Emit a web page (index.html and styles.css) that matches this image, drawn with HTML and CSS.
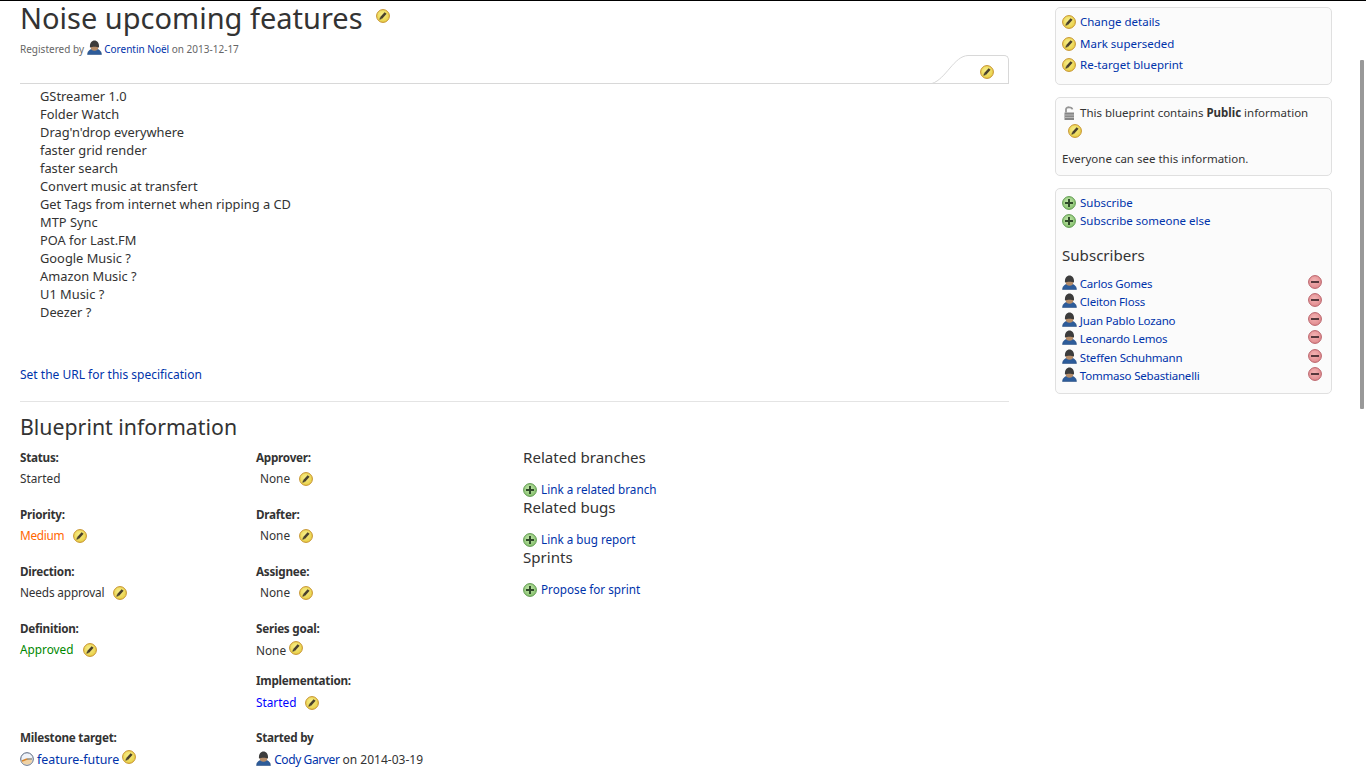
FILE: index.html
```html
<!DOCTYPE html>
<html lang="en">
<head>
    <meta charset="UTF-8">
    <title>Noise upcoming features : Blueprints</title>
    <link rel="stylesheet" href="styles.css">
</head>
<body>
    <svg class="defs" width="0" height="0">
        <defs>
            <radialGradient id="edit-fill" cx="45%" cy="40%" r="60%">
                <stop offset="0" stop-color="#f8ef8c"/>
                <stop offset="1" stop-color="#e8cf45"/>
            </radialGradient>
            <radialGradient id="add-fill" cx="45%" cy="40%" r="60%">
                <stop offset="0" stop-color="#c4e8ae"/>
                <stop offset="1" stop-color="#86c06c"/>
            </radialGradient>
            <radialGradient id="remove-fill" cx="45%" cy="40%" r="60%">
                <stop offset="0" stop-color="#f4b4b4"/>
                <stop offset="1" stop-color="#e08a8e"/>
            </radialGradient>
            <symbol id="edit" viewBox="0 0 14 14">
                <circle cx="7" cy="7" r="6.4" fill="url(#edit-fill)" stroke="#c6922e"/>
                <path d="M5 9.2l4.6-5.2" stroke="#49402c" stroke-width="2.6"/>
                <path d="M3.4 10.8l.6-2.6 1.9 1.7z" fill="#49402c"/>
            </symbol>
            <symbol id="add" viewBox="0 0 14 14">
                <circle cx="7" cy="7" r="6.4" fill="url(#add-fill)" stroke="#5f9a4f"/>
                <path d="M7 3v8M3 7h8" stroke="#2f4a2a" stroke-width="2"/>
            </symbol>
            <symbol id="remove" viewBox="0 0 14 14">
                <circle cx="7" cy="7" r="6.4" fill="url(#remove-fill)" stroke="#b9626a"/>
                <path d="M3 7h8" stroke="#57383c" stroke-width="2"/>
            </symbol>
            <symbol id="person" viewBox="0 0 15 15">
                <path d="M.6 14.6c0-3.6 2.4-5.6 6.9-5.6s6.9 2 6.9 5.6z" fill="#2d5c9a" stroke="#234a80" stroke-width=".6"/>
                <ellipse cx="7.5" cy="7" rx="3.8" ry="3.8" fill="#b58c68"/>
                <path d="M3 7.6C2.4 2.6 5 .4 7.5.4s5.1 2.2 4.5 7.2C10 6.4 5 6.4 3 7.6z" fill="#3c3c3c"/>
            </symbol>
            <symbol id="milestone" viewBox="0 0 14 14">
                <circle cx="7" cy="7" r="6.3" fill="#eef2f8" stroke="#56657d"/>
                <path d="M7 7L1.6 9.2A5.6 5.6 0 0 0 7 12.6a5.6 5.6 0 0 0 5.4-4z" fill="#f0d2a4"/>
                <path d="M7 7L2 9" stroke="#d8842a" stroke-width="1.4"/>
                <path d="M7 7h5" stroke="#6b5a40"/>
            </symbol>
            <symbol id="lock" viewBox="0 0 14 14">
                <rect x="2.5" y="6.5" width="9.5" height="7.5" fill="#858585"/>
                <path d="M4 6.5V3.2C4 .6 10 .6 10.4 3.4" fill="none" stroke="#969696" stroke-width="1.8"/>
                <path d="M2.5 9h9.5M2.5 11.4h9.5" stroke="#bdbdbd"/>
            </symbol>
        </defs>
    </svg>

    <div class="topline"></div>
    <div class="scrollthumb"></div>

    <div class="layout">
        <main class="main">
            <h1>Noise upcoming features <svg class="ico h1-ico"><use href="#edit"/></svg></h1>
            <p class="registered">Registered by <svg class="ico person"><use href="#person"/></svg> <a href="#">Corentin Noël</a> on 2013-12-17</p>

            <div class="tabrow">
                <div class="tab">
                    <svg class="tab-curve" width="46" height="29" viewBox="0 0 46 29"><path d="M0 28.5C14 24 22 1 36 .5H46" fill="#fff" stroke="#d8d8d8"/></svg>
                    <div class="tab-body"><svg class="ico"><use href="#edit"/></svg></div>
                </div>
            </div>

            <div class="whiteboard">
                <div>GStreamer 1.0</div>
                <div>Folder Watch</div>
                <div>Drag'n'drop everywhere</div>
                <div>faster grid render</div>
                <div>faster search</div>
                <div>Convert music at transfert</div>
                <div>Get Tags from internet when ripping a CD</div>
                <div>MTP Sync</div>
                <div>POA for Last.FM</div>
                <div>Google Music ?</div>
                <div>Amazon Music ?</div>
                <div>U1 Music ?</div>
                <div>Deezer ?</div>
            </div>

            <p class="spec-url"><a href="#">Set the URL for this specification</a></p>
            <hr class="rule">

            <h2>Blueprint information</h2>
            <div class="info">
                <div class="info-col col-a">
                    <dl class="field"><dt>Status:</dt><dd>Started</dd></dl>
                    <dl class="field"><dt>Priority:</dt><dd><span class="medium">Medium</span><svg class="ico gap"><use href="#edit"/></svg></dd></dl>
                    <dl class="field"><dt>Direction:</dt><dd><span class="needs">Needs approval</span><svg class="ico gap"><use href="#edit"/></svg></dd></dl>
                    <dl class="field tall"><dt>Definition:</dt><dd><span class="approved">Approved</span><svg class="ico gap"><use href="#edit"/></svg></dd></dl>
                    <dl class="field low"><dt>Milestone target:</dt><dd><svg class="ico clock"><use href="#milestone"/></svg> <a href="#" class="wide">feature-future</a> <svg class="ico raised"><use href="#edit"/></svg></dd></dl>
                </div>
                <div class="info-col col-b">
                    <dl class="field"><dt>Approver:</dt><dd class="inset">None<svg class="ico gap"><use href="#edit"/></svg></dd></dl>
                    <dl class="field"><dt>Drafter:</dt><dd class="inset">None<svg class="ico gap"><use href="#edit"/></svg></dd></dl>
                    <dl class="field"><dt>Assignee:</dt><dd class="inset">None<svg class="ico gap"><use href="#edit"/></svg></dd></dl>
                    <dl class="field short low"><dt>Series goal:</dt><dd>None <svg class="ico raised"><use href="#edit"/></svg></dd></dl>
                    <dl class="field low"><dt>Implementation:</dt><dd><span class="started">Started</span><svg class="ico gap"><use href="#edit"/></svg></dd></dl>
                    <dl class="field low"><dt>Started by</dt><dd class="byline"><svg class="ico person"><use href="#person"/></svg> <a href="#" class="narrow">Cody Garver</a> on 2014-03-19</dd></dl>
                </div>
                <div class="info-col col-c">
                    <h3>Related branches</h3>
                    <p class="addlink"><svg class="ico"><use href="#add"/></svg> <a href="#">Link a related branch</a></p>
                    <h3>Related bugs</h3>
                    <p class="addlink"><svg class="ico"><use href="#add"/></svg> <a href="#">Link a bug report</a></p>
                    <h3>Sprints</h3>
                    <p class="addlink"><svg class="ico"><use href="#add"/></svg> <a href="#">Propose for sprint</a></p>
                </div>
            </div>
        </main>

        <aside class="side">
            <div class="portlet actions">
                <div class="act"><svg class="ico"><use href="#edit"/></svg> <a href="#">Change details</a></div>
                <div class="act"><svg class="ico"><use href="#edit"/></svg> <a href="#">Mark superseded</a></div>
                <div class="act"><svg class="ico"><use href="#edit"/></svg> <a href="#">Re-target blueprint</a></div>
            </div>
            <div class="portlet privacy">
                <div class="priv-line"><svg class="ico"><use href="#lock"/></svg> This blueprint contains <b>Public</b> information</div>
                <div class="priv-edit"><svg class="ico"><use href="#edit"/></svg></div>
                <div>Everyone can see this information.</div>
            </div>
            <div class="portlet subs">
                <div class="sub"><svg class="ico"><use href="#add"/></svg> <a href="#">Subscribe</a></div>
                <div class="sub"><svg class="ico"><use href="#add"/></svg> <a href="#">Subscribe someone else</a></div>
                <h3 class="subs-title">Subscribers</h3>
                <ul class="sub-list">
                    <li><span><svg class="ico person"><use href="#person"/></svg> <a href="#">Carlos Gomes</a></span><svg class="ico remove"><use href="#remove"/></svg></li>
                    <li><span><svg class="ico person"><use href="#person"/></svg> <a href="#">Cleiton Floss</a></span><svg class="ico remove"><use href="#remove"/></svg></li>
                    <li><span><svg class="ico person"><use href="#person"/></svg> <a href="#">Juan Pablo Lozano</a></span><svg class="ico remove"><use href="#remove"/></svg></li>
                    <li><span><svg class="ico person"><use href="#person"/></svg> <a href="#">Leonardo Lemos</a></span><svg class="ico remove"><use href="#remove"/></svg></li>
                    <li><span><svg class="ico person"><use href="#person"/></svg> <a href="#">Steffen Schuhmann</a></span><svg class="ico remove"><use href="#remove"/></svg></li>
                    <li><span><svg class="ico person"><use href="#person"/></svg> <a href="#">Tommaso Sebastianelli</a></span><svg class="ico remove"><use href="#remove"/></svg></li>
                </ul>
            </div>
        </aside>
    </div>
</body>
</html>
```

FILE: styles.css
```css
html, body {
    margin: 0;
    height: 768px;
    overflow: hidden;
    background: #fff;
}
body {
    font-family: "Noto Sans", "Open Sans", sans-serif;
    font-size: 12px;
    line-height: 18px;
    color: #333;
}
a {
    color: #03a;
    text-decoration: none;
}
.defs {
    position: absolute;
}
.topline {
    height: 1px;
    background: #000;
}
.scrollthumb {
    position: absolute;
    right: 2px;
    top: 60px;
    width: 4px;
    height: 349px;
    border-radius: 1px;
    background: #999;
}
.ico {
    width: 14px;
    height: 14px;
    vertical-align: -3px;
}
.person {
    width: 15px;
    height: 15px;
    vertical-align: -2px;
}
.clock {
    vertical-align: -2px;
}
.gap {
    margin-left: 9px;
}
.raised {
    vertical-align: 0;
}
.layout {
    display: flex;
    padding-left: 20px;
}
.main {
    width: 989px;
}
h1 {
    margin: 0;
    height: 37px;
    font-size: 29px;
    font-weight: 400;
    line-height: 33px;
}
.h1-ico {
    margin-left: 6px;
    vertical-align: 6px;
}
.registered {
    margin: 2px 0 0;
    font-size: 10px;
    color: #666;
}
.tabrow {
    display: flex;
    justify-content: flex-end;
    margin-top: -3px;
    border-bottom: 1px solid #d8d8d8;
}
.tab {
    display: flex;
    height: 29px;
    margin-bottom: -1px;
}
.tab-curve {
    display: block;
}
.tab-body {
    width: 31px;
    padding: 7px 0 0 2px;
    border: 1px solid #d8d8d8;
    border-width: 1px 1px 0 0;
    border-top-right-radius: 5px;
    box-sizing: border-box;
}
.whiteboard {
    padding: 3px 0 0 20px;
    height: 263px;
    font-size: 12.85px;
}
.spec-url {
    margin: 16px 0 0;
}
.rule {
    margin: 17px 0 0;
    border: 0;
    border-top: 1px solid #e4e4e4;
}
h2 {
    margin: 10px 0 0;
    font-size: 21.3px;
    font-weight: 400;
    line-height: 30px;
}
.info {
    display: flex;
    margin-top: 6px;
    font-size: 11.8px;
}
.col-a {
    width: 236px;
}
.col-b {
    width: 267px;
}
.col-c {
    margin-top: -3px;
    font-size: 11.7px;
}
.col-c .ico {
    margin-right: 1px;
}
.field {
    margin: 0 0 15px;
    height: 42px;
}
.field dt {
    font-size: 11.7px;
    font-weight: 700;
    letter-spacing: -.25px;
}
.field dd {
    margin: 2px 0 0;
    line-height: 21px;
}
.field.low dd {
    margin-top: 3px;
}
.inset {
    padding-left: 4px;
}
.tall {
    height: 94px;
}
.short {
    margin-bottom: 10px;
}
.wide {
    font-size: 12.4px;
}
.byline {
    font-size: 12px;
}
.narrow {
    letter-spacing: -.4px;
}
.needs {
    letter-spacing: -.15px;
}
.medium {
    color: #f60;
    letter-spacing: -.3px;
}
.approved {
    color: #080;
}
.started {
    color: #00f;
}
h3 {
    margin: 0;
    font-size: 15.1px;
    font-weight: 400;
    line-height: 24px;
}
.addlink {
    margin: 12px 0 0;
    height: 14px;
    line-height: 16px;
}
.side {
    margin-left: 46px;
    width: 277px;
    padding-top: 6px;
    font-size: 11.5px;
}
.side .ico {
    margin-right: 1px;
}
.portlet {
    border: 1px solid #e0e0e0;
    border-radius: 5px;
    background: #fbfbfb;
    padding: 6px;
    margin-bottom: 12px;
    box-sizing: border-box;
}
.actions {
    height: 78px;
    padding-top: 5px;
}
.act {
    height: 21.5px;
}
.privacy {
    height: 79px;
}
.priv-edit {
    padding-left: 6px;
    height: 28px;
}
.subs {
    height: 206px;
    padding-top: 5px;
}
.sub {
    height: 18px;
}
.subs-title {
    margin-top: 13px;
}
.sub-list {
    margin: 8px 0 0;
    padding: 0 3px 0 0;
    list-style: none;
    letter-spacing: -.2px;
}
.sub-list li {
    display: flex;
    justify-content: space-between;
    align-items: flex-start;
    height: 18.4px;
}
.side .person {
    margin-right: 0;
}
.side .remove {
    display: block;
    margin: 0;
}
```
